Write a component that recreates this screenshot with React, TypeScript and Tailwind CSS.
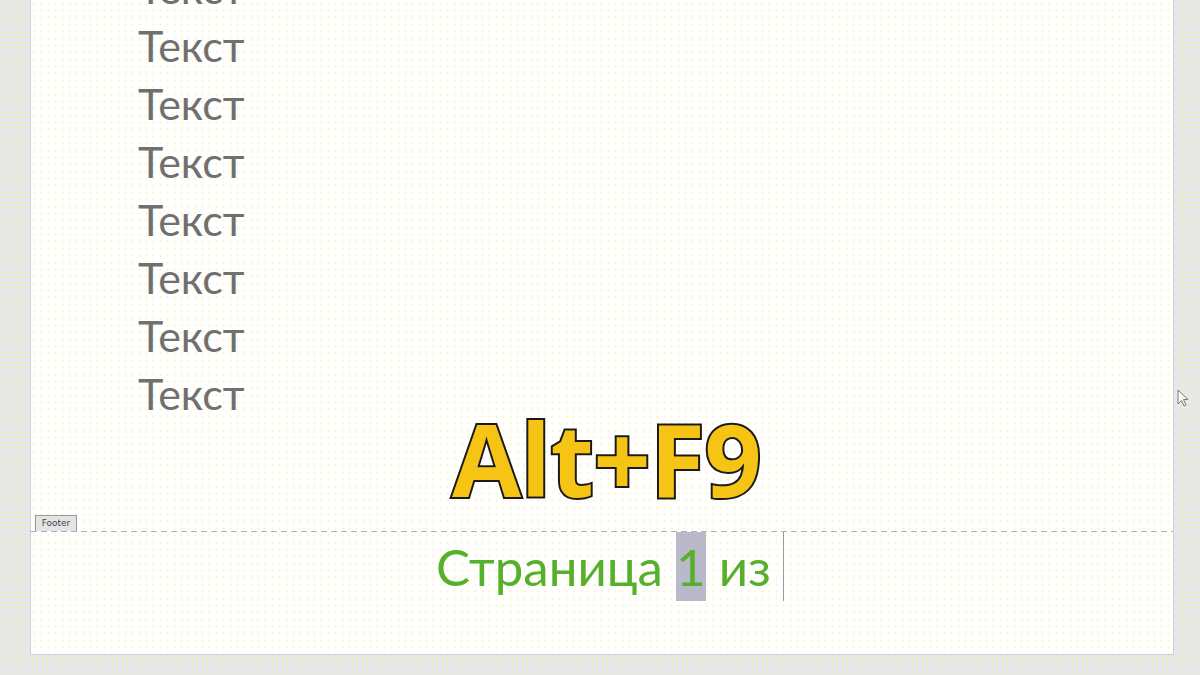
import React from "react";

const lines = Array.from({ length: 8 });

export default function App() {
  return (
    <div
      className="relative w-[1200px] h-[675px] overflow-hidden bg-[#e6e6f1] bg-[radial-gradient(#f3f0b0_1px,transparent_1.2px)] bg-[length:5px_5px] pl-[30px]"
    >
      <div className="w-[1144px] h-[655px] bg-white bg-[radial-gradient(#fbf8d0_1px,transparent_1.2px)] bg-[length:7px_7px] border-l border-r border-b border-[#cfcfd4] flex flex-col">
        <div className="mt-[-41px] pl-[107px] flex flex-col" style={{ fontFamily: "Lato, 'Noto Sans', sans-serif" }}>
          {lines.map((_, i) => (
            <div key={i} className="h-[58px] leading-[58px] text-[43px] text-[#707070]">
              Текст
            </div>
          ))}
        </div>
        <div className="mt-[92px] flex flex-col">
          <div className="ml-[4px] w-[42px] h-[16px] border border-[#9a9a9a] border-b-0 bg-[#e4e4e4] text-[9px] leading-[15px] text-[#444] text-center" style={{ fontFamily: "'DejaVu Sans', sans-serif" }}>
            Footer
          </div>
          <div className="h-px bg-[repeating-linear-gradient(90deg,#adadd0_0px,#adadd0_6px,transparent_6px,transparent_10px)]" />
          <div className="pl-[405px] flex items-stretch h-[69px] whitespace-pre" style={{ fontFamily: "Lato, 'Noto Sans', sans-serif" }}>
            <span className="text-[51px] leading-[69px] text-[#56b02c]">Страница </span>
            <span className="text-[51px] leading-[69px] text-[#56b02c] bg-[#b9b9c9]">1</span>
            <span className="text-[51px] leading-[69px] text-[#56b02c]"> из</span>
            <span className="ml-[12px] w-px bg-[#9a9a9a]" />
          </div>
        </div>
      </div>

      <div
        className="absolute left-[452px] top-[395px] text-[100px] font-bold leading-[126px] text-[#f5c414] tracking-[-0.5px]"
        style={{ fontFamily: "'Open Sans', sans-serif", WebkitTextStroke: "4px #1a1a1a", paintOrder: "stroke fill" }}
      >
        Alt+F9
      </div>

      <svg className="absolute left-[1177px] top-[389px]" width="13" height="19" viewBox="0 0 13 19">
        <path d="M1 1 L1 15 L4.5 11.5 L7 17 L9 16 L6.5 10.5 L11 10.5 Z" fill="#fafafa" stroke="#777" strokeWidth="1" strokeLinejoin="round" />
      </svg>
    </div>
  );
}
